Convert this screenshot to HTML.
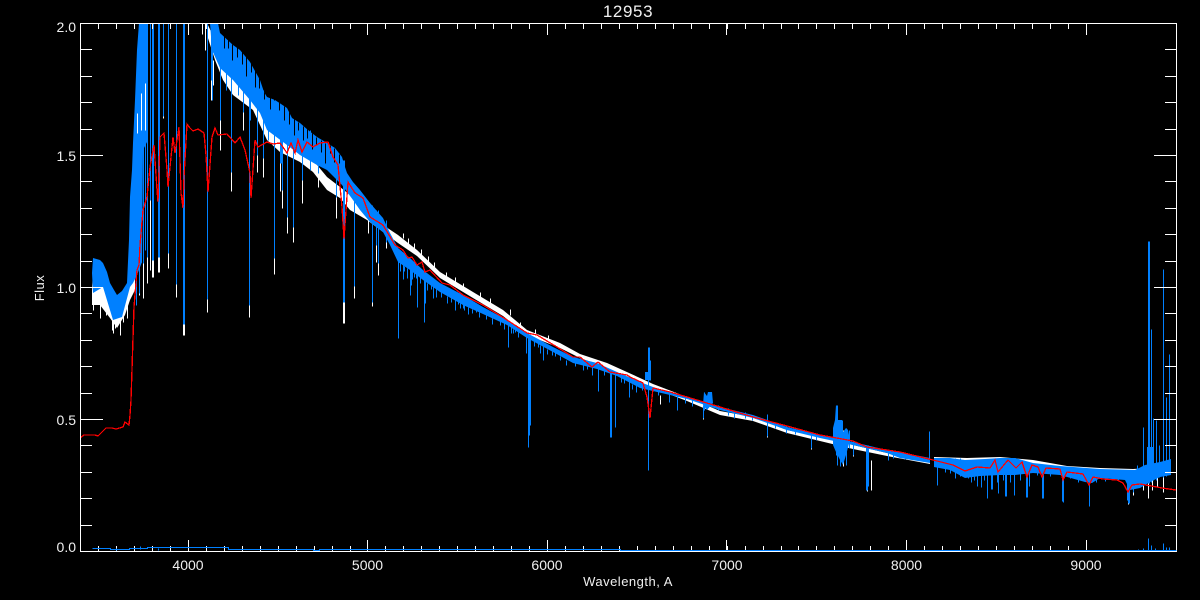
<!DOCTYPE html>
<html>
<head>
<meta charset="utf-8">
<title>12953</title>
<style>
html,body{margin:0;padding:0;background:#000;width:1200px;height:600px;overflow:hidden}
svg{display:block}
text{font-family:"Liberation Sans",sans-serif;fill:#f0f0f0}
</style>
</head>
<body>
<svg width="1200" height="600" viewBox="0 0 1200 600" xmlns="http://www.w3.org/2000/svg">
<rect width="1200" height="600" fill="#000"/>

<!-- white spectrum -->
<g fill="#fff" stroke="none">
<polygon points="92,290 93,270 100,275 105,280 110,295 117,310 125,300 130,285 135,250 135,290 130,300 125,315 117,328 110,318 100,305 92,305"/>
<polygon points="207,23 215,40 223,62 233,78 253,87 267,123 280,137 300,147 313,160 327,177 340,187 350,195 367,213 383,225 398,235 417,250 440,272 473,292 503,310 527,330 560,343 580,354 607,363 640,378 653,384 687,397 720,411 753,417 787,430 820,437 853,445 887,453 920,458 930,461 930,464 887,456 853,449 820,441 787,433 753,421 720,415 687,401 653,388 640,384 607,368 580,358 560,348 527,335 503,316 473,298 440,278 417,256 398,243 383,232 367,220 350,210 340,198 327,190 313,172 300,162 280,152 267,140 253,110 233,95 223,80 215,60 207,35"/>
<polygon points="934,457 967,458 1000,457 1033,460 1067,466 1100,468 1133,469 1167,467 1170,470 1170,475 1133,475 1100,473 1067,471 1033,465 1000,462 967,463 934,462"/>
</g>
<g transform="translate(.5 .5)" fill="none" stroke="#fff" stroke-width="1" shape-rendering="crispEdges">
<path d="M93 290V310M96 290V300M100 280V318M106 290V315M112 300V330M115 300V328M120 300V335M123 300V322M127 300V318M113 310V333
M136 150V305M139 200V295M141 100V262M143 180V298M145 90V130M147 100V283M150 100V270M152 30V277M153 30V277M158 30V272M159 30V272M163 30V118M168 30V268M176 30V297M183 30V335M184 30V335M188 23V34
M202 23V34M205 23V50M207 50V312M211 60V100M213 60V85M220 70V150M231 90V191M243 80V130M249 80V317M257 100V172M263 100V177M274 110V274M280 135V191M282 135V208M287 140V233M293 140V242M302 150V203M318 165V187M336 190V218M343 200V323M344 200V323M354 210V298M368 220V233M372 220V306M376 225V262M378 225V275M386 230V248
M403 233V238M408 238V244M414 243V250M421 249V255M428 256V262M434 262V268M446 272V278M455 277V284M463 283V288M480 292V298M490 298V304M510 309V315M520 322V328M535 329V335M548 335V340
M648 347V378M871 460V490M867 450V491M811 435V449M767 425V437M703 405V419M660 395V404M840 425V466M843 430V466M846 430V465M853 440V456
M1148 470V498M1152 470V490M1157 470V486M1163 470V492M1143 470V490M1133 470V495M1128 480V504"/>
</g>

<!-- blue spectrum -->
<g fill="#0080ff" stroke="none">
<polygon points="92,273 93,258 100,260 103,263 107,272 110,283 114,290 117,295 122,291 127,283 129,240 130,197 132,170 133,143 135,100 137,50 139,23 148,23 148,140 143,150 142,262 137,275 133,283 130,287 122,317 113,320 103,287 93,293"/>
<polygon points="210,23 218,23 220,33 233,45 240,50 250,62 260,80 264,92 267,97 275,100 287,108 292,118 300,123 308,130 317,137 327,143 335,148 342,157 345,167 347,173 353,182 360,190 370,203 383,218 390,233 398,248 410,258 423,270 440,283 463,295 483,307 507,320 527,333 553,347 573,357 597,363 617,372 640,382 653,387 687,397 720,407 753,415 787,427 820,435 853,442 887,450 920,456 930,458 930,463 900,458 887,453 853,445 820,438 787,430 753,418 720,410 687,399 653,391 640,388 617,376 597,369 573,363 553,352 527,338 507,325 483,314 463,305 440,292 423,280 410,270 398,262 390,245 383,232 370,222 360,210 353,200 342,185 327,170 317,165 300,155 287,145 267,130 260,113 250,100 233,80 220,68 212,50"/>
<polygon points="934,458 950,458 965,460 985,459 1000,458 1015,458 1033,463 1060,466 1100,469 1135,470 1145,465 1160,462 1171,459 1171,475 1160,477 1150,482 1140,488 1130,490 1125,480 1100,478 1092,483 1085,482 1060,475 1033,473 1015,475 1000,475 980,476 965,478 950,470 934,467"/>
<polygon points="703,405 704,392 707,396 708,392 712,392 713,403 707,410"/>
<polygon points="833,428 835,420 836,405 838,420 842,420 843,432 846,428 848,430 850,440 846,455 843,465 840,460 836,452 833,445"/>
<rect x="645" y="372" width="6" height="8"/>
<rect x="1147" y="447" width="7" height="28"/>
</g>
<!-- dark notches in the blue envelope -->
<g transform="translate(.5 .5)" fill="none" stroke="#000" stroke-width="1" shape-rendering="crispEdges">
<path d="M224 36v12M228 40v8M232 44v16M237 47v10M242 50v14M246 56v20M251 62v10M255 69v18M259 78v10M264 92v7M270 97v12M274 99v20M279 102v8M284 106v14M289 112v12M294 119v16M298 122v8M303 126v14M307 129v9M312 133v16M316 137v8M321 140v12M325 143v20M330 145v8M334 148v14M339 154v9"/>
</g>
<g transform="translate(.5 .5)" fill="none" stroke="#0080ff" stroke-width="1" shape-rendering="crispEdges">
<path d="M136 150V305M139 200V293M141 100V245M143 100V263M145 23V250M147 23V257M150 23V200M152 23V260M153 23V260M158 23V257M159 23V257M163 23V116M168 23V253M176 23V284M183 23V324M184 23V324
M207 23V299M211 23V80M212 40V100M220 60V120M226 60V90M231 70V172M238 70V95M243 70V112M249 70V305M250 90V120M257 90V155M263 90V158M268 100V140M274 100V258M280 110V163M281 110V163M282 110V190M287 110V217M293 120V227M302 125V180M310 130V170M318 140V173M327 145V165M336 150V197M343 160V302M344 160V302M354 185V286
M372 205V302M368 205V218M376 210V245M378 210V263M386 220V242M398 250V338M403 255V279M410 260V295M411 260V285M414 265V277M417 270V307M424 275V322M425 275V303M433 285V298M445 290V293M458 298V304M464 300V310M463 298V308
M400 262v9M404 266v5M407 268v10M412 271v8M416 274v4M420 277v6M427 283v7M431 285v4M436 289v8M441 292v5M447 296v7M451 298v4M455 300v10M460 303v5M468 307v7M472 309v4M479 312v5M486 315v4M492 318v6M500 321v4M504 323v6M513 329v4M518 332v5M534 341v5M538 343v4M547 349v5M552 351v4M560 356v4M566 360v5M583 365v5M587 366v3M604 371v4M624 379v4M632 384v5
M476 305V312M488 310V316M498 315V320M508 322V347M511 325V333M515 325V332M526 335V353M528 335V447M529 335V435M530 335V425M540 345V353M543 345V360M555 350V356M575 358V366M580 358V363M592 367V375M598 365V391M610 372V437M611 372V437M615 374V427M621 375V382M629 378V397
M636 382V392M642 384V390M648 347V470M649 347V380M650 360V380M658 388V395M669 392V402M677 395V410M685 398V403M692 400V406M703 405V418M704 392V410M710 392V405M718 405V410M728 408V415M734 410V418M745 412V418M752 415V420M767 414V436M775 422V428M786 425V433M795 428V434M811 432V448M816 434V440
M836 405V455M837 405V465M840 420V466M842 420V455M846 428V465M849 430V448M853 440V455M866 445V490M867 445V490M868 445V486M888 450V460M893 452V458M905 455V459
M929 431V462M937 458V485M945 458V472M950 458V473M955 458V478M960 458V476M968 460V478M971 460V482M974 460V480M977 460V486M981 460V487M984 460V480M987 460V498M991 460V489M992 460V489M997 460V482M998 460V493M1003 458V480M1005 458V496M1006 458V496M1014 460V495M1010 458V482M1020 460V480M1026 462V497M1027 462V497M1029 462V486M1037 463V475M1042 465V498M1043 465V498M1050 465V476M1062 467V501M1063 467V502M1070 470V478M1078 470V482M1089 472V506M1096 472V482M1105 472V481M1118 472V481M1127 472V500M1128 472V503M1129 472V503M1133 472V492M1137 465V482M1143 427V482M1148 241V483M1149 241V483M1151 329V482M1153 418V480M1156 420V480M1159 445V477M1163 269V477M1166 397V476M1169 354V470"/>
</g>
<g transform="translate(.5 .5)" fill="none" stroke="#fff" stroke-width="1" shape-rendering="crispEdges">
<path d="M137 113V133M141 93V130M145 83V130"/>
</g>

<!-- red model -->
<polyline fill="none" stroke="#ff0000" stroke-width="1.3" stroke-linejoin="miter" shape-rendering="crispEdges" points="80,438 84,435 95,435 98,436 103,431 106,428 112,428 116,429 123,427 125,422 129,425 130,415 131,400 133,338 134,307 137,270 139,265 140,245 143,210 147,197 150,167 154,145 157,190 158,202 160,137 164,133 167,170 168,187 170,167 173,137 175,153 179,127 181,193 183,208 184,177 187,124 190,128 193,131 198,129 204,133 206,155 208,192 212,137 215,128 218,135 227,134 235,143 240,137 245,150 250,173 251,198 255,140 258,147 267,142 273,144 280,143 287,153 291,143 295,153 298,140 302,152 307,142 313,147 320,143 328,142 333,157 338,165 342,207 344,239 348,182 355,193 363,198 370,217 383,225 395,245 403,250 408,258 412,257 417,265 422,262 425,272 430,270 442,283 450,285 463,295 483,305 507,320 527,333 537,335 557,347 573,357 580,357 592,367 598,362 610,372 627,375 630,377 643,383 647,397 650,418 653,388 670,392 687,397 720,407 753,417 787,426 820,435 853,441 867,447 887,450 900,452 933,460 953,465 965,471 977,467 990,468 995,460 998,472 1008,460 1016,468 1022,462 1027,477 1032,465 1038,467 1042,477 1046,468 1060,469 1063,480 1067,472 1083,474 1089,485 1093,477 1103,479 1117,480 1123,483 1128,492 1132,485 1140,484 1157,487 1162,488 1176,490"/>

<!-- axes -->
<g fill="none" stroke="#fff" stroke-width="1" shape-rendering="crispEdges">
<rect x="80.5" y="23.5" width="1096" height="528"/>
<path d="M98.5 546v5m18-5v5m18-5v5m18-5v5m18-5v5m18-5v5m18-5v5m18-5v5m18-5v5m18-5v5m18-5v5m18-5v5m18-5v5m18-5v5m18-5v5m17-5v5m18-5v5m18-5v5m18-5v5m18-5v5m18-5v5m18-5v5m18-5v5m18-5v5m18-5v5m18-5v5m18-5v5m18-5v5m18-5v5m18-5v5m18-5v5m18-5v5m18-5v5m18-5v5m18-5v5m18-5v5m18-5v5m18-5v5m18-5v5m17-5v5m18-5v5m18-5v5m18-5v5m18-5v5m18-5v5m18-5v5m18-5v5m18-5v5m18-5v5m18-5v5m18-5v5m18-5v5m18-5v5m18-5v5m18-5v5m18-5v5"/>
<path d="M98.5 24v5m18-5v5m18-5v5m18-5v5m18-5v5m18-5v5m18-5v5m18-5v5m18-5v5m18-5v5m18-5v5m18-5v5m18-5v5m18-5v5m18-5v5m17-5v5m18-5v5m18-5v5m18-5v5m18-5v5m18-5v5m18-5v5m18-5v5m18-5v5m18-5v5m18-5v5m18-5v5m18-5v5m18-5v5m18-5v5m18-5v5m18-5v5m18-5v5m18-5v5m18-5v5m18-5v5m18-5v5m18-5v5m18-5v5m17-5v5m18-5v5m18-5v5m18-5v5m18-5v5m18-5v5m18-5v5m18-5v5m18-5v5m18-5v5m18-5v5m18-5v5m18-5v5m18-5v5m18-5v5m18-5v5m18-5v5"/>
<path d="M81 49.5h11M81 76.5h11M81 102.5h11M81 129.5h11M81 181.5h11M81 208.5h11M81 234.5h11M81 261.5h11M81 313.5h11M81 340.5h11M81 366.5h11M81 393.5h11M81 445.5h11M81 472.5h11M81 498.5h11M81 525.5h11"/>
<path d="M1165 49.5h11M1165 76.5h11M1165 102.5h11M1165 129.5h11M1165 181.5h11M1165 208.5h11M1165 234.5h11M1165 261.5h11M1165 313.5h11M1165 340.5h11M1165 366.5h11M1165 393.5h11M1165 445.5h11M1165 472.5h11M1165 498.5h11M1165 525.5h11"/>
<path d="M188.5 540V551M367.5 540V551M547.5 540V551M726.5 540V551M906.5 540V551M1086.5 540V551M188.5 24V35M367.5 24V35M547.5 24V35M726.5 24V35M906.5 24V35M1086.5 24V35M81 419.5H103M81 287.5H103M81 155.5H103M1154 419.5H1176M1154 287.5H1176M1154 155.5H1176"/>
</g>

<!-- error spectrum -->
<g transform="translate(.5 .5)" fill="none" stroke="#0080ff" stroke-width="1.3" shape-rendering="crispEdges">
<path d="M92 548H110V549H129V548H147V547H228V549H313V550H319V549H620V550H1176M1148 538V550M1151 545V550M1155 548V550M1163 543V550M1166 547V550M1169 547V550M1143 548V550M1138 549V550M116 548V550M140 546V549M158 548V550"/>
</g>

<!-- labels -->
<text x="628" y="17" font-size="17" text-anchor="middle" letter-spacing=".6">12953</text>
<g font-size="14" text-anchor="end">
<text x="76" y="32">2.0</text>
<text x="76" y="161">1.5</text>
<text x="76" y="293">1.0</text>
<text x="76" y="425">0.5</text>
<text x="76" y="552">0.0</text>
</g>
<g font-size="14" text-anchor="middle">
<text x="188" y="570">4000</text>
<text x="367.5" y="570">5000</text>
<text x="547" y="570">6000</text>
<text x="727" y="570">7000</text>
<text x="906.5" y="570">8000</text>
<text x="1086" y="570">9000</text>
</g>
<text x="628" y="586" font-size="13" text-anchor="middle" letter-spacing=".5">Wavelength, A</text>
<text transform="translate(44 288) rotate(-90)" font-size="13" text-anchor="middle" letter-spacing=".5">Flux</text>
</svg>
</body>
</html>
